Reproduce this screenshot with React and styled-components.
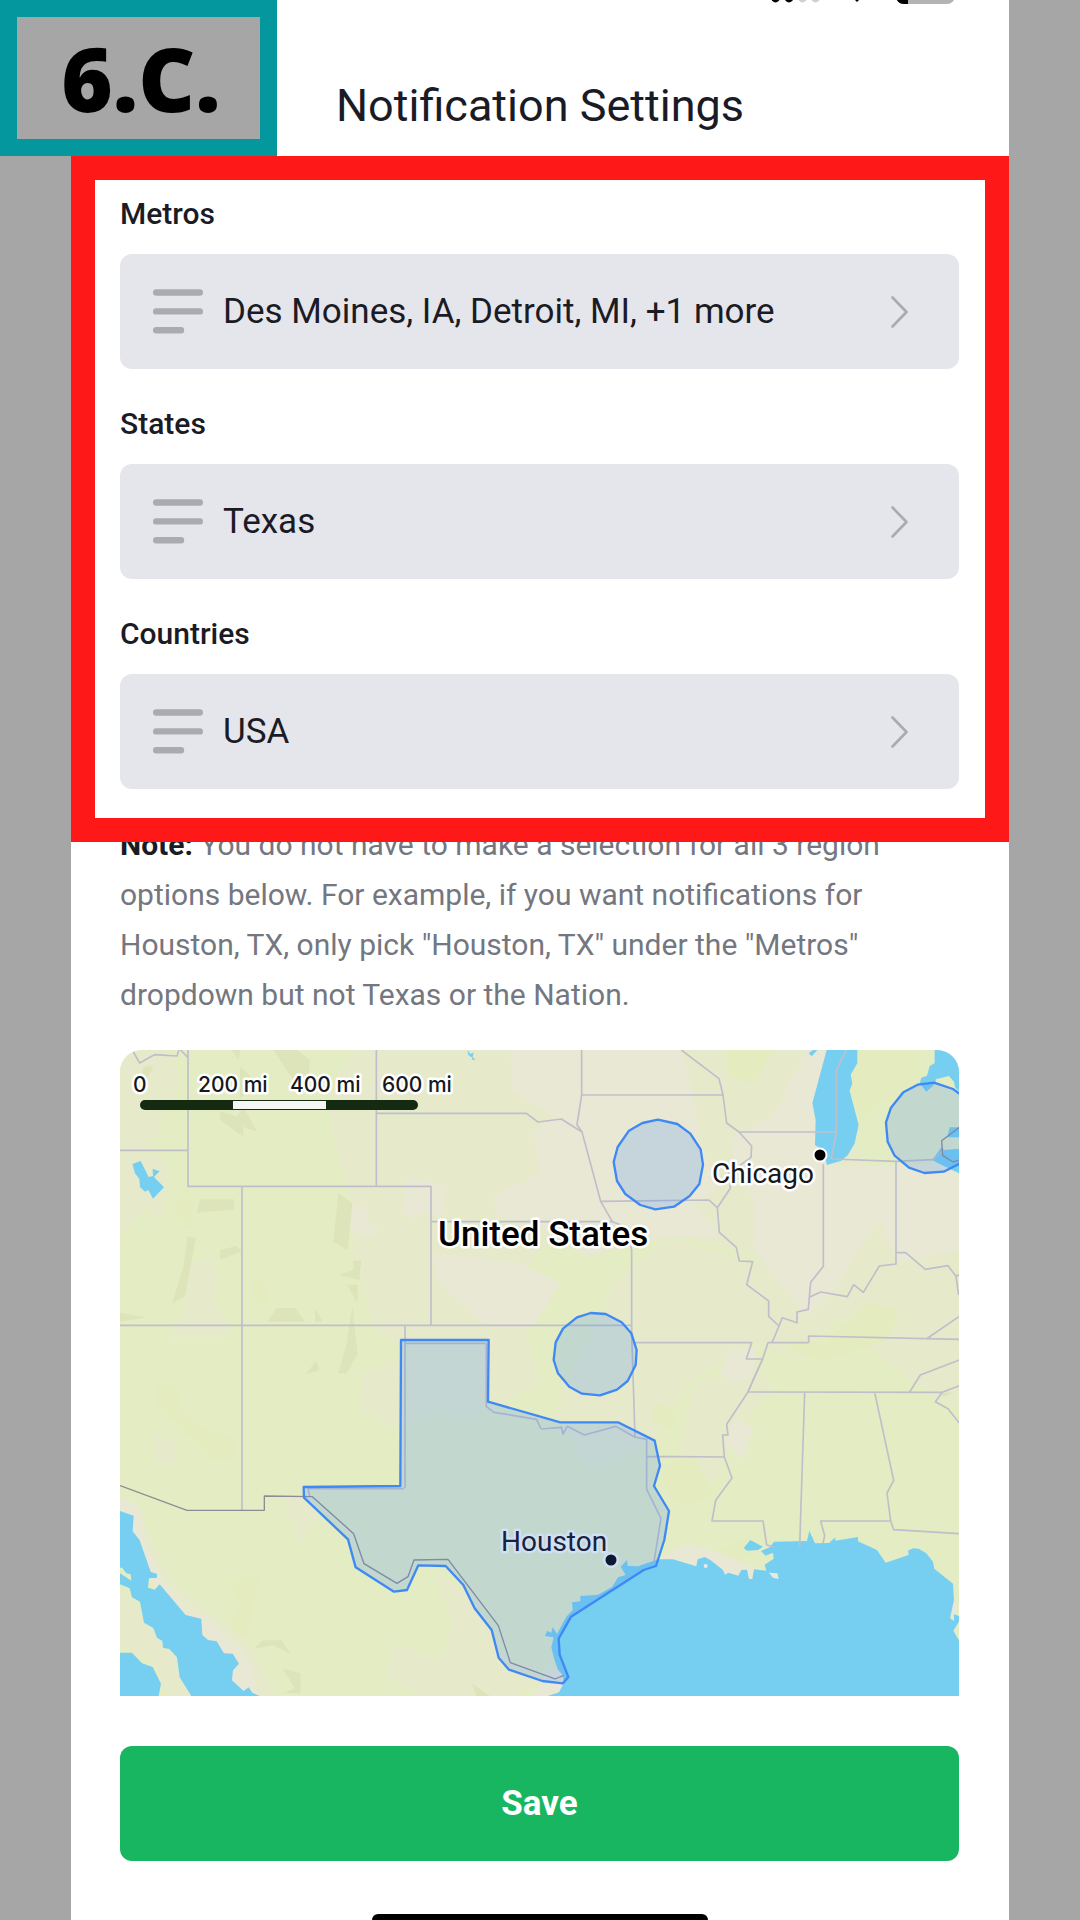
import React from "react";
import styled, { createGlobalStyle } from "styled-components";

const GlobalStyle = createGlobalStyle`
  *, *::before, *::after { box-sizing: border-box; }
  body {
    margin: 0;
    background: #a6a6a6;
    font-family: Roboto, "Liberation Sans", sans-serif;
    color: #1b1b25;
  }
  button { font: inherit; color: inherit; border: 0; cursor: pointer; }
`;

const Page = styled.div`
  position: relative;
  padding: 0 71px;
`;

const StepBadge = styled.div`
  position: absolute;
  top: 0;
  left: 0;
  z-index: 2;
  display: flex;
  align-items: center;
  justify-content: center;
  width: 277px;
  height: 156px;
  padding-left: 5px;
  border: 17px solid #04989e;
  background: #a6a6a6;
  color: #000;
  font: 800 88px/120px "Open Sans", sans-serif;
`;

const Phone = styled.main`
  background: #fff;
`;

const StatusBar = styled.div`
  display: flex;
  justify-content: flex-end;
  height: 4px;
  padding-right: 54px;
`;

const Header = styled.header`
  padding: 76px 0 24px;
  text-align: center;
`;

const Title = styled.h1`
  margin: 0;
  font-size: 45px;
  line-height: 52px;
  font-weight: 400;
`;

const Highlight = styled.section`
  position: relative;
  z-index: 1;
  display: flex;
  flex-direction: column;
  gap: 38px;
  padding: 17px 26px 29px 25px;
  border: 24px solid #ff1818;
  background: #fff;
`;

const Field = styled.div`
  display: flex;
  flex-direction: column;
  gap: 23px;
`;

const FieldLabel = styled.label`
  font-size: 30px;
  line-height: 34px;
  font-weight: 500;
`;

const Picker = styled.button`
  display: flex;
  align-items: center;
  gap: 20px;
  height: 115px;
  padding: 0 51px 0 33px;
  border-radius: 12px;
  background: #e5e6eb;
  text-align: left;
`;

const PickerValue = styled.span`
  flex: 1;
  font-size: 35px;
  line-height: 40px;
`;

const Content = styled.div`
  display: flex;
  flex-direction: column;
  padding: 0 50px 0 49px;
`;

const Note = styled.p`
  margin: -22px 0 30px;
  padding-right: 60px;
  font-size: 30px;
  line-height: 50px;
  color: #747780;

  strong { font-weight: 700; color: #1b1b25; }
`;

const MapFrame = styled.div`
  overflow: hidden;
  border-radius: 22px 22px 0 0;

  svg { display: block; width: 100%; height: auto; }
`;

const SaveButton = styled.button`
  height: 115px;
  margin: 50px 0 53px;
  border-radius: 12px;
  background: #18b660;
  color: #fff;
  font-size: 35px;
  line-height: 40px;
  font-weight: 700;
`;

const HomeIndicator = styled.div`
  align-self: center;
  width: 336px;
  height: 6px;
  border-radius: 8px 8px 0 0;
  background: #000;
`;

const MapText = styled.text`
  font-family: ${(p) => (p.$scale ? "Inter" : "Roboto")}, sans-serif;
  font-size: ${(p) => p.$size}px;
  font-weight: ${(p) => p.$weight || 400};
  fill: ${(p) => p.$color || "#16181c"};
  stroke: ${(p) => p.$halo || "#fff"};
  stroke-width: 5px;
  stroke-linejoin: round;
  paint-order: stroke;
`;

const LinesIcon = () => (
  <svg width="50" height="45" viewBox="0 0 50 45" stroke="#a9abb1" strokeWidth="6.4" strokeLinecap="round" aria-hidden="true">
    <path d="M3.2 3.5H46.8M3.2 22.4H46.8M3.2 41.3H28" />
  </svg>
);

const ChevronIcon = () => (
  <svg width="17" height="32" viewBox="0 0 17 32" fill="none" stroke="#a9abb1" strokeWidth="2.6" strokeLinecap="round" strokeLinejoin="round" aria-hidden="true">
    <path d="M1.5 1.5L15.5 16L1.5 30.5" />
  </svg>
);

const StatusIcons = () => (
  <svg width="184" height="4" viewBox="0 0 184 4" aria-hidden="true">
    <circle cx="4.5" cy="-2" r="4.4" />
    <circle cx="18" cy="-2" r="4.4" />
    <circle cx="31.5" cy="-2" r="4.4" fill="#cfcfcf" />
    <circle cx="44.5" cy="-2" r="4.4" fill="#cfcfcf" />
    <path d="M83 -1H89L86 2Z" />
    <rect x="125" y="-22" width="59" height="26" rx="8" fill="#b3b3b3" />
    <path d="M125 -2Q127 4 133 4H137V-2Z" />
  </svg>
);

const land = {
  mid: [
    "M700 0H1500V400L1300 560L1180 700L1260 1000L1060 1100L900 930L760 830L700 600L680 400L640 260L620 160Z",
    "M0 0H150L180 90L130 200L90 300H0Z",
    "M1480 700L1640 560L1900 640L2060 600L2160 800L2040 930L1900 880L1700 1000L1600 1180L1420 1260L1300 1100Z",
    "M1700 0H2120L2160 200L2240 360L2516 340V1080L2300 940L2150 800L1900 620L1700 560Z",
    "M1720 1000L1900 940L1960 1020L1860 1120L1780 1300L1680 1200Z",
    "M0 300L130 320L150 400L120 520L80 470L0 560Z",
    "M210 640L270 620L300 680L280 750L330 830L320 860H150L190 780Z",
    "M780 950L900 900L960 1000L1060 980V1120L960 1080L820 1130L720 1080L730 970L650 990Z",
    "M100 1150L170 1180L160 1250L110 1240Z",
    "M480 1330L580 1350L590 1400L540 1480Z",
    "M940 1560L1060 1640L1140 1800L1280 1890L1180 1938H900L800 1880L820 1780L960 1830L1000 1720Z",
    "M40 1330L90 1460L150 1590L260 1680L340 1740L400 1800L470 1938H380L240 1800L130 1680L60 1500Z",
    "M0 1620L90 1700L170 1800L230 1938H150L90 1830L0 1790Z",
  ],
  tan: [
    "M1170 0H1500L1680 80V0H1690L1740 250L1690 420L1800 560L1640 560L1400 620L1240 520L1130 500L1120 440L1260 370L1240 250L1300 200L1180 120Z",
    "M1380 0H1680L1720 240L1790 400L1760 450L1560 500L1480 400L1420 270Z",
    "M1060 620L1200 640L1320 700L1240 830L1100 830L960 700L930 610Z",
    "M1960 200L2060 0H2140L2080 160L2090 300L2150 350L2516 340V600L2330 640L2280 500L2210 600L2160 700L2060 800L1980 700L1900 590L1900 450L1850 360L1830 270Z",
    "M700 460L740 470V520L780 540L740 560L690 540Z",
    "M860 380L980 410L960 500L910 480L880 510L850 480Z",
    "M1830 900L1910 890L1900 980L1840 1000L1800 970Z",
    "M1840 1110L1900 1130L1870 1230L1820 1180Z",
    "M0 1340L60 1370L80 1490L130 1590L215 1690L275 1705L325 1770L370 1805L395 1850L415 1938H360L250 1800L130 1680L60 1500L0 1390Z",
    "M1610 1530L1700 1480L1800 1510L1960 1580V1630L1800 1600L1700 1540Z",
    "M1290 1850L1340 1870L1330 1938H1240Z",
    "M2380 1570L2440 1610L2510 1660V1780L2480 1600Z",
  ],
  green: [
    "M1820 0H1960L1900 100L1820 80Z",
    "M2200 0H2400V80L2280 160L2220 220L2190 120Z",
    "M180 440L220 450L210 540L160 500Z",
    "M400 680L450 710L440 780L400 740Z",
    "M110 990L170 1010L180 1080L260 1140L340 1160V1230H270L180 1130L110 1070Z",
    "M1600 1060L1680 1080L1660 1140L1600 1120Z",
    "M2000 860L2120 880L2240 760L2340 780L2300 870L2120 930L2000 900Z",
    "M1620 1260L1720 1210L1780 1330L1700 1370L1640 1330Z",
    "M320 1590L420 1570L380 1760L330 1730L360 1660Z",
    "M1790 1500L1880 1460L1900 1500L1820 1560Z",
  ],
  relief: [
    "M240 448H342V478L230 488Z",
    "M202 560H228L195 740L157 760L190 650Z",
    "M655 430L697 460L683 600L640 575Z",
    "M300 600L350 588L366 604L300 630Z",
    "M470 774H525L555 815H443Z",
    "M697 770L713 912L680 970H655L680 880Z",
    "M730 632H724L718 690L657 675L700 660V632Z",
    "M682 704H714L712 760Z",
    "M585 775L610 815H585Z",
    "M588 932L598 960L558 972Z",
    "M300 182L350 200L370 170L412 246L370 230V260L300 210Z",
    "M460 0H530L570 30L565 80L520 90Z",
    "M335 0H362L355 30Z M360 50L418 100L360 145Z",
    "M70 50L100 48L82 90H65Z",
    "M0 788L80 802L0 815Z",
    "M400 1797L430 1771H485L512 1812L460 1785Z",
    "M487 1855L542 1870V1930H490L525 1915Z",
    "M1055 1900L1110 1938H1070Z",
    "M2460 1030L2504 1026L2470 1042Z",
  ],
};

const TEXAS =
  "M843 870H1106L1104 1055L1321 1117H1494L1604 1172L1620 1247L1602 1308L1647 1383L1633 1470L1608 1548L1571 1560L1353 1700L1316 1766L1319 1814L1345 1881L1329 1900L1267 1893L1167 1859L1136 1823L1115 1740L1064 1675L1030 1605L977 1548L895 1546L861 1620L822 1625L707 1552L684 1468L552 1343L551 1311L841 1308Z";

function RegionMap() {
  return (
    <svg viewBox="0 0 839 646" role="img" aria-label="Map of selected notification regions">
      <rect width="839" height="646" fill="#e4ecc3" />
      <g transform="scale(0.33333)">
        {land.mid.map((d) => <path key={d} d={d} fill="#e6eacb" />)}
        {land.green.map((d) => <path key={d} d={d} fill="#e3ebbf" />)}
        {land.tan.map((d) => <path key={d} d={d} fill="#e9e8d5" />)}
        {land.relief.map((d) => <path key={d} d={d} fill="#dde4b9" />)}

        <g fill="#76cff1">
          <g transform="translate(-31 -30)">
            <path d="M68 372L93 363L117 411L130 408L129 386L150 394L133 411L163 442L130 476L116 450L106 455L91 441L89 417L76 400Z" />
            <path d="M1073 30L1082 42L1092 37L1089 52L1098 59H1086L1088 53L1076 45Z" />
          </g>
          <g transform="translate(1259 -30)">
            <path d="M861 30L818 190L828 240L826 315L850 330L862 375L905 362L925 345L945 310L957 255L930 152L938 130L933 104L953 70V30Z" />
            <path d="M807 40L820 30H833L816 49Z" />
            <path d="M1185 30V70L1170 78L1162 107L1145 113L1140 130L1160 155L1188 130V118L1228 108L1243 125L1246 142L1259 155V30Z" />
            <path d="M1230 262H1259V292H1223Z M1178 360L1205 322L1215 330L1259 326V400L1200 372Z" />
          </g>
          <g transform="translate(-31 930)">
            <path d="M31 453L72 467L69 514L90 541L123 635L142 642V653L118 655L115 683L135 689L150 673L228 765L275 776L278 825L295 840L321 844L343 880L369 881L388 911L370 931L367 961L402 993L417 982L428 998L450 1008H245L210 952L202 892L179 867L160 863L158 843L142 833L131 804L103 788L91 725L67 712L60 685L31 673V640L65 662L63 643L50 640L36 622L31 625Z" />
            <path d="M31 878H67L97 910L129 921L154 971L147 1008H31Z" />
          </g>
          <g transform="translate(1259 930)">
            <path d="M25 1008L58 997L72 970L70 945L55 930L43 895L35 862L42 832L16 828L22 813L35 818L39 801L52 822L80 770L99 750L97 727L122 724V708L175 704L218 680L235 652L258 645L243 620L262 600L264 618L295 619L355 598H400L470 619L474 598L495 591L512 600L550 630L556 644L566 638L596 647L605 630L622 629L628 657H638L643 628L680 632L675 614L702 596L700 578L678 587L664 573L690 562L703 545L802 543L809 512L826 550L868 549L887 532V542L955 531V544L1012 570L1038 608L1107 585L1105 572L1120 565L1137 566L1160 580L1180 605L1184 626L1240 671L1243 720L1231 775L1243 783V763L1259 768V783L1241 812L1259 843V1008Z" />
            <path d="M612 564L632 540L670 560L655 570L622 572Z" />
          </g>
        </g>
        <g transform="translate(1259 930)" fill="#eee9df">
          <path d="M688 638L713 640L717 657L700 653Z" />
          <circle cx="498" cy="618" r="6" />
        </g>

        <g fill="none" stroke="#bebfcb" strokeWidth="5" strokeLinejoin="round">
          <path transform="translate(-31 -30)" d="M68 30L90 69L134 44L202 48L208 30M213 30L235 53M235 30V439H964V857M31 331H235M800 30V439M800 220H1250L1285 246L1355 237L1417 276M397 439V1411M31 856H1565M886 856V1345M964 545H1508" />
          <path transform="translate(1259 -30)" d="M126 30V165L112 254L127 276L183 484L218 545L262 562L276 632V880L286 1190M126 165H550M425 30L538 116L550 165L561 249L598 276L636 318L634 352L568 400L572 445L533 503L539 577L590 622L599 663L639 665L621 734L687 783V829L718 858L697 908M598 276H890M183 484L508 480L533 503M920 30L890 92V276L875 357L1070 364L1180 359L1215 330M851 373V679L813 727L806 808L772 816V848L728 833L718 858M1069 364V672L1019 678L971 757L942 734L923 770L843 756L809 772M1069 638H1098L1157 688L1225 677L1249 709L1257 765M1249 709L1259 704M283 908H636L620 957H669M807 908V888L1259 898M807 908H685L669 957L640 1020L625 1056M1160 897L1259 829" />
          <path transform="translate(1259 930)" d="M669 -3L625 96L561 193L565 225H549L554 291L577 354L528 421L517 483H670L681 555L700 560M625 96L1208 97L1259 77M1208 97L1187 125L1225 146L1259 189M1110 96L1142 45L1259 0M795 97L780 560M1005 97L1062 361L1042 399L1053 483L1062 509L1259 521M1053 483H843L855 527L850 550M322 289L554 291M5 207L66 202L70 222L83 199L134 225L228 199L285 231L321 238V388L364 475L343 605" />
          <path transform="translate(-31 930)" d="M1130 -50V140L1153 157L1281 178L1294 207M884 -50H1130M882 386H595L600 408" />
        </g>
        <g fill="none" stroke="#8f8b93" strokeWidth="4" strokeLinejoin="round">
          <path transform="translate(-31 930)" d="M31 377L232 451H464V408L608 410L732 521L763 611L862 670L895 650L913 600L1015 598L1166 797L1202 908L1336 957L1362 946" />
          <path transform="translate(1259 -30)" d="M1259 262L1206 302L1209 346L1240 366L1259 360" />
        </g>

        <g fill="#3a86f6" fillOpacity="0.2" stroke="#3f89f5" strokeWidth="7" strokeLinejoin="round">
          <path d={TEXAS} />
          <g transform="translate(1259 -30)">
            <path d="M355 239L413 252L452 281L483 328L490 374L479 432L450 468L403 500L347 508L302 495L257 462L232 423L222 366L234 321L268 272L308 249Z" />
            <path d="M1183 128L1240 147L1285 180L1310 240V300L1290 350L1257 372L1212 395L1154 399L1108 383L1065 347L1044 305L1039 247L1054 203L1091 157L1134 134Z" />
            <path d="M153 819L198 822L246 847L275 880L291 930L288 975L264 1023L232 1049L181 1066L127 1061L89 1040L55 1000L42 960L48 907L70 866L112 832Z" />
          </g>
        </g>
      </g>

      <rect x="20" y="50" width="278" height="10" rx="5" fill="#142b12" />
      <rect x="113" y="51" width="93" height="8" fill="#f5f5f5" />
      <MapText $scale $size={21} $weight={500} x="13" y="42">0</MapText>
      <MapText $scale $size={21} $weight={500} x="78" y="42">200 mi</MapText>
      <MapText $scale $size={21} $weight={500} x="170" y="42">400 mi</MapText>
      <MapText $scale $size={21} $weight={500} x="262" y="42">600 mi</MapText>

      <MapText $size={35} $weight={500} $color="#000" x="318" y="196">United States</MapText>
      <MapText $size={28} x="592" y="133">Chicago</MapText>
      <circle cx="700" cy="105" r="7.5" fill="#fff" />
      <circle cx="700" cy="105" r="5.5" fill="#000" />
      <MapText $size={28} $color="#17233c" $halo="#d3dff3" x="381" y="501">Houston</MapText>
      <circle cx="491" cy="510" r="8" fill="#d3dff3" />
      <circle cx="491" cy="510" r="5.5" fill="#0c1730" />
    </svg>
  );
}

const regions = [
  { id: "metros", label: "Metros", value: "Des Moines, IA, Detroit, MI, +1 more" },
  { id: "states", label: "States", value: "Texas" },
  { id: "countries", label: "Countries", value: "USA" },
];

export default function App() {
  return (
    <Page>
      <GlobalStyle />
      <StepBadge>6.C.</StepBadge>
      <Phone>
        <StatusBar>
          <StatusIcons />
        </StatusBar>
        <Header>
          <Title>Notification Settings</Title>
        </Header>
        <Highlight>
          {regions.map((r) => (
            <Field key={r.id}>
              <FieldLabel htmlFor={r.id}>{r.label}</FieldLabel>
              <Picker id={r.id} type="button">
                <LinesIcon />
                <PickerValue>{r.value}</PickerValue>
                <ChevronIcon />
              </Picker>
            </Field>
          ))}
        </Highlight>
        <Content>
          <Note>
            <strong>Note:</strong> You do not have to make a selection for all 3 region options
            below. For example, if you want notifications for Houston, TX, only pick "Houston, TX"
            under the "Metros" dropdown but not Texas or the Nation.
          </Note>
          <MapFrame>
            <RegionMap />
          </MapFrame>
          <SaveButton type="button">Save</SaveButton>
          <HomeIndicator />
        </Content>
      </Phone>
    </Page>
  );
}
